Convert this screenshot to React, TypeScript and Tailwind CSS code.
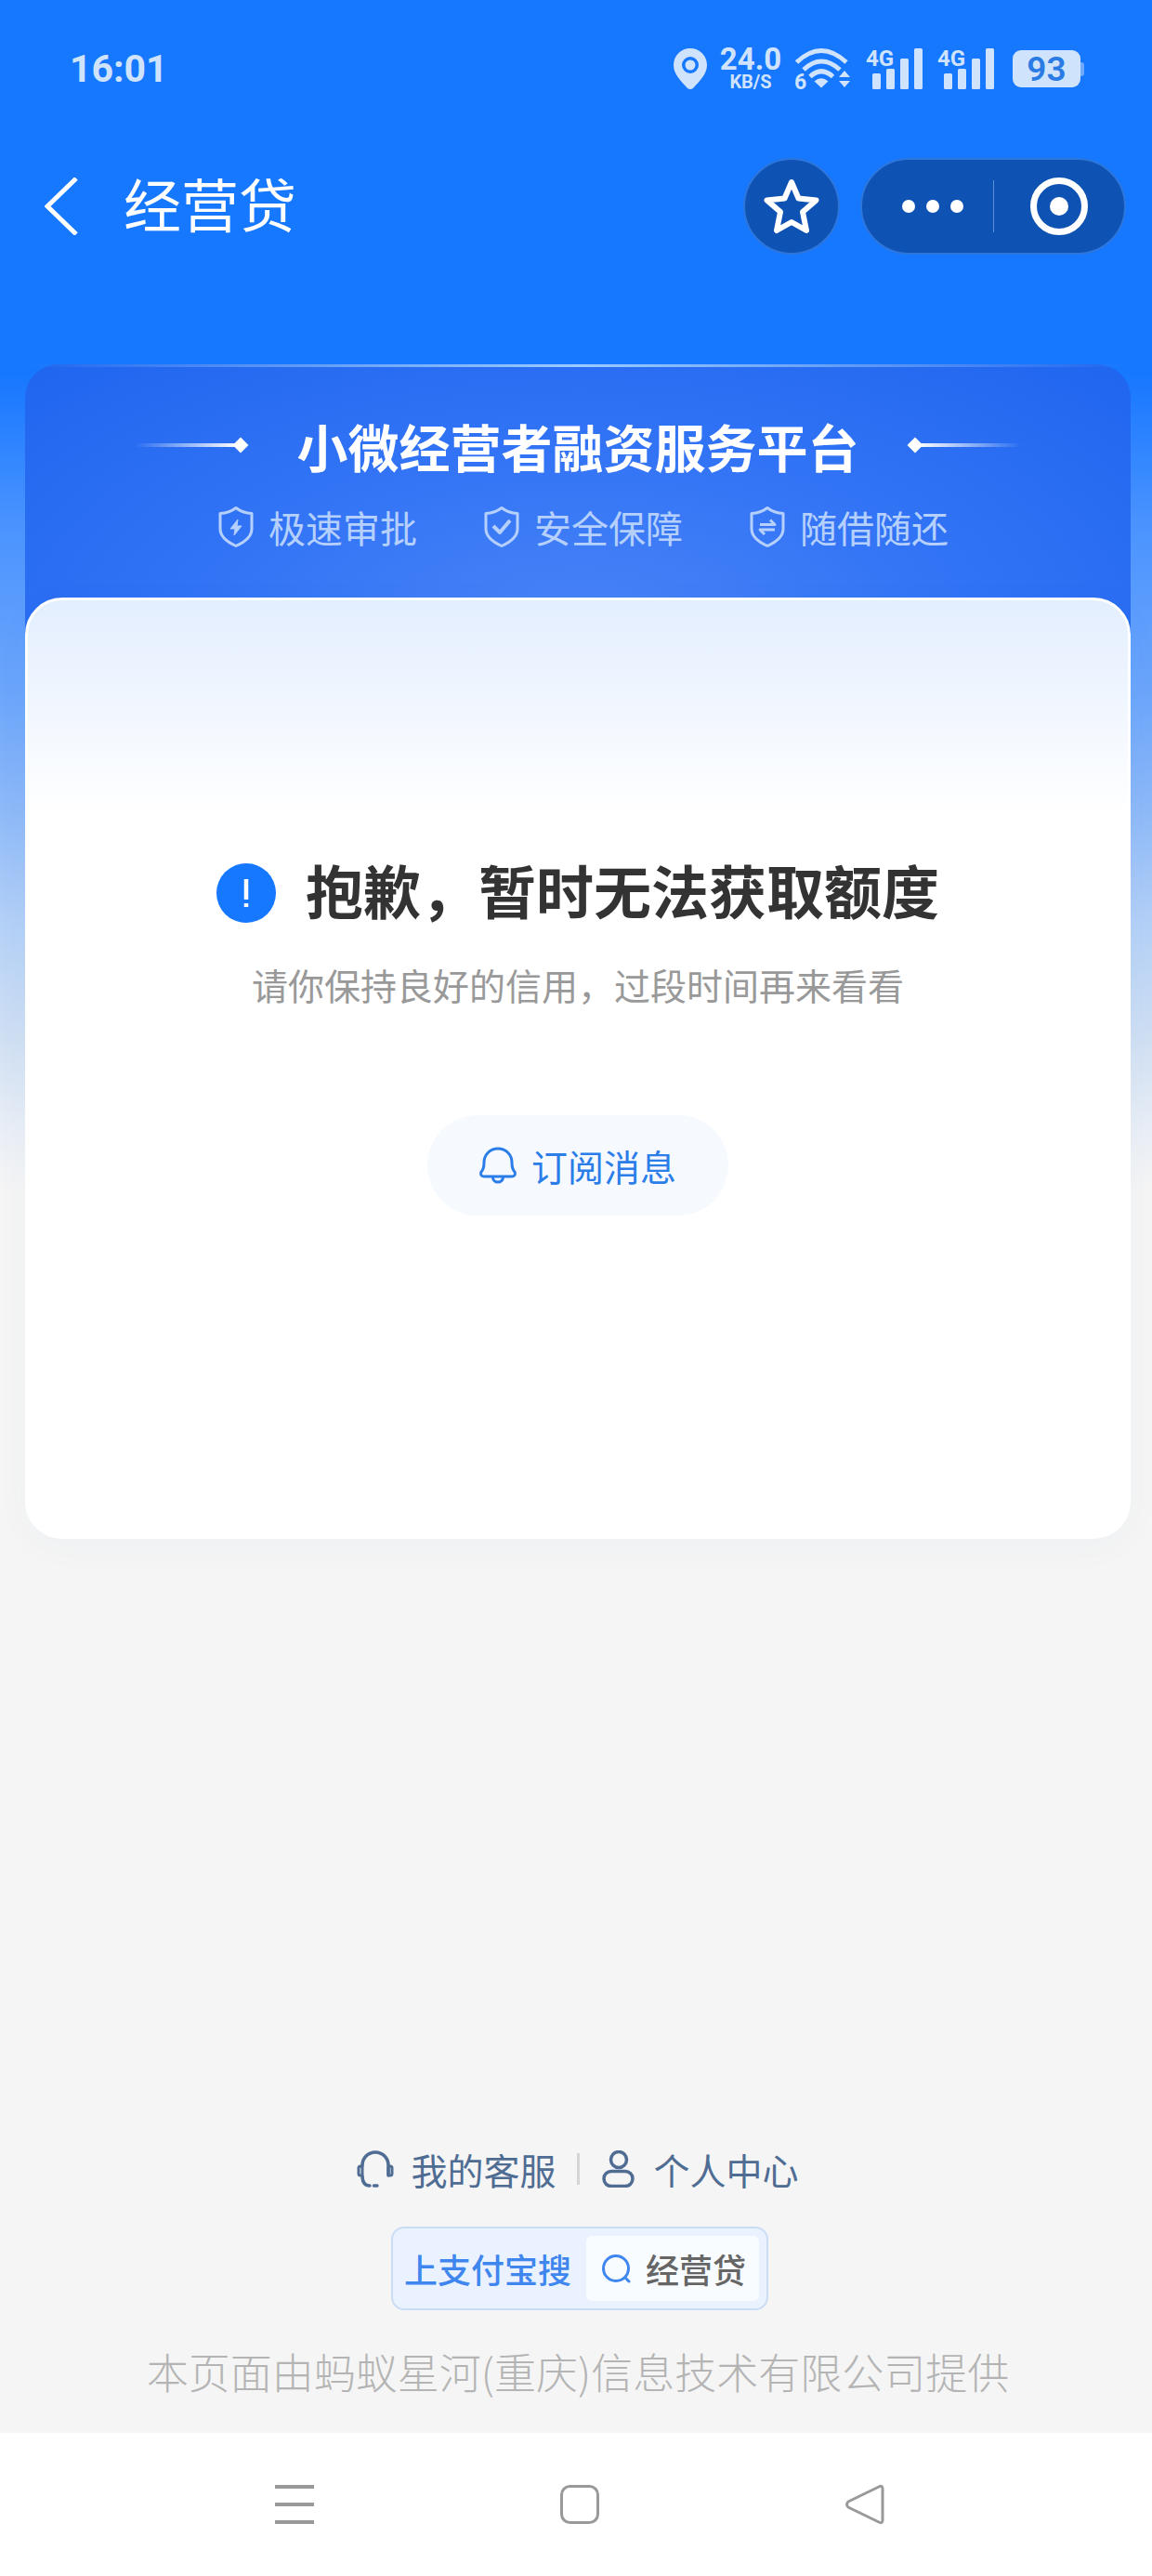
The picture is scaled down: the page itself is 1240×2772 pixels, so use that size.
import type { ReactNode } from 'react'

const StatusBar = () => {
	return (
		<div className="flex h-[148px] items-center justify-between pr-[73px] pl-[75px] font-['Roboto','Noto_Sans_CJK_SC',sans-serif] text-[#d0e3fc]">
			<time className="text-[41px] leading-none font-bold">16:01</time>
			<div className="flex items-center">
				<svg width="36" height="44" viewBox="0 0 36 44" aria-hidden="true">
					<path
						fill="currentColor"
						fillRule="evenodd"
						d="M18 0a18 18 0 0 1 18 18c0 10-8 17-15 25q-3 2-6 0C8 35 0 28 0 18A18 18 0 0 1 18 0Zm0 9a9 9 0 1 0 0 18 9 9 0 0 0 0-18Z"
					/>
					<circle cx="18" cy="18" r="5.5" fill="currentColor" />
				</svg>
				<div className="ml-3 flex w-[70px] flex-col items-center font-bold">
					<span className="text-[33px] leading-[28px]">24.0</span>
					<span className="text-[20px] leading-[20px]">KB/S</span>
				</div>
				<WifiIcon />
				<Signal />
				<Signal />
				<div className="ml-5 flex items-center">
					<div className="flex h-10 w-[73px] items-center justify-center rounded-[9px] bg-[#d0e3fc] text-[37px] leading-none font-semibold text-[#2b7be4]">
						93
					</div>
					<span className="h-[15px] w-1 rounded-r-[3px] bg-[#6fa9fb]" />
				</div>
			</div>
		</div>
	)
}

const WifiIcon = () => (
	<svg className="ml-3 overflow-visible" width="61" height="46" viewBox="0 0 61 46" aria-hidden="true">
		<g fill="none" stroke="currentColor" strokeWidth="5">
			<path d="M2.5 16Q29 -9 56 16" />
			<path d="M10 24Q29 6 49 24" />
			<path d="M17 31.500Q29 20 41.500 31.500" />
		</g>
		<path d="M29 43.500 21.500 36.500Q29 30 36.500 36.500Z" fill="currentColor" />
		<path d="m54 25 6 7H48ZM54 43l6-7H48Z" fill="currentColor" />
		<text x="0" y="45" fontSize="23" fontWeight="700" fill="currentColor">
			6
		</text>
	</svg>
)

const Signal = () => (
	<svg className="ml-4 overflow-visible" width="61" height="46" viewBox="0 0 61 46" aria-hidden="true">
		<text x="0" y="20" fontSize="24" fontWeight="700" fill="currentColor">
			4G
		</text>
		<g fill="currentColor">
			<rect x="7" y="28" width="9" height="17" rx="1.500" />
			<rect x="22" y="23" width="9" height="22" rx="1.500" />
			<rect x="37" y="12" width="9" height="33" rx="1.500" />
			<rect x="52" y="1" width="9" height="44" rx="1.500" />
		</g>
	</svg>
)

const TitleBar = () => {
	return (
		<header className="flex h-[148px] items-center pr-7 pl-12 text-white">
			<button type="button" aria-label="返回">
				<svg width="37" height="62" viewBox="0 0 37 62" fill="none" stroke="currentColor" strokeWidth="5">
					<path d="M34 1 3 31l31 30" />
				</svg>
			</button>
			<h1 className="ml-12 pb-2 text-[62px] leading-[72px]">经营贷</h1>
			<button
				type="button"
				aria-label="收藏"
				className="ml-auto flex size-[104px] items-center justify-center rounded-full border-2 border-[#2d76dc] bg-[#0e53b3]"
			>
				<svg width="60" height="62" viewBox="0 0 60 62" fill="none" stroke="currentColor" strokeWidth="6" strokeLinejoin="round">
					<path d="m30 5 7.500 17.500 19 2L42 37l4 20-16-9-16 9 4-20L3.500 24.500l19-2Z" />
				</svg>
			</button>
			<div className="ml-[22px] flex h-[104px] w-[286px] items-center rounded-full border-2 border-[#2d76dc] bg-[#0e53b3]">
				<button type="button" aria-label="更多" className="flex h-full w-1/2 items-center justify-center gap-3 pl-3">
					<span className="size-3.5 rounded-full bg-white" />
					<span className="size-3.5 rounded-full bg-white" />
					<span className="size-3.5 rounded-full bg-white" />
				</button>
				<span className="h-14 w-px bg-[#5b8fd8]" />
				<button type="button" aria-label="关闭" className="flex h-full w-1/2 items-center justify-center">
					<span className="flex size-[62px] items-center justify-center rounded-full border-[7px] border-white">
						<span className="size-5 rounded-full bg-white" />
					</span>
				</button>
			</div>
		</header>
	)
}

const Shield = ({ children }: { children: ReactNode }) => (
	<svg width="38" height="46" viewBox="0 0 38 46" fill="none" stroke="currentColor" strokeWidth="3" strokeLinejoin="round" aria-hidden="true">
		<path d="M19 2.500Q26 8 36 8.500V25Q36 36 19 43.500 2 36 2 25V8.500Q12 8 19 2.500Z" />
		{children}
	</svg>
)

const features = [
	{
		label: '极速审批',
		mark: <path d="M21 15 13 25h5l-1 7 8-10h-5Z" fill="currentColor" strokeWidth="1" />,
	},
	{
		label: '安全保障',
		mark: <path d="m10 22 7 7 11-13" strokeWidth="4" />,
	},
	{
		label: '随借随还',
		mark: <path d="M11 20.500h16l-5-5M27 26H11l5 5" />,
	},
]

const Banner = () => {
	return (
		<div className="rounded-t-[36px] bg-[radial-gradient(ellipse_at_50%_100%,#4a84f6_0%,#3475f6_45%,#1f65ee_100%)] pb-[92px]">
			<div className="h-[3px] bg-linear-to-r from-transparent via-[#9bcbff] to-transparent" />
			<div className="flex items-center justify-center gap-[54px] pt-[52px]">
				<TitleLine />
				<h2 className="text-[55px] leading-[64px] font-bold text-white">小微经营者融资服务平台</h2>
				<TitleLine flipped />
			</div>
			<ul className="mt-8 flex justify-center gap-[72px] pl-3 text-[#b5d0fd]">
				{features.map((feature) => (
					<li key={feature.label} className="flex items-center gap-4">
						<Shield>{feature.mark}</Shield>
						<span className="text-[40px] leading-[48px]">{feature.label}</span>
					</li>
				))}
			</ul>
		</div>
	)
}

const TitleLine = ({ flipped = false }: { flipped?: boolean }) => (
	<span className={flipped ? 'flex rotate-180 items-center' : 'flex items-center'}>
		<span className="h-1 w-28 bg-linear-to-r from-transparent to-white" />
		<span className="-ml-1 size-3 rotate-45 bg-white" />
	</span>
)

const ResultCard = () => {
	return (
		<section className="-mt-10 flex flex-col items-center rounded-[40px] border-3 border-white bg-white bg-linear-to-b from-[#e3eefe] to-white to-[230px] pt-[275px] pb-[345px] shadow-[0_8px_40px_rgba(40,90,160,0.03)]">
			<div className="flex items-center gap-8">
				<svg width="64" height="64" viewBox="0 0 64 64" aria-hidden="true">
					<circle cx="32" cy="32" r="32" fill="#1677ff" />
					<path d="M32 17v22M32 43v4" stroke="#fff" strokeWidth="4.500" />
				</svg>
				<h2 className="pb-2 text-[62px] leading-[72px] font-bold text-[#333]">抱歉，暂时无法获取额度</h2>
			</div>
			<p className="mt-[34px] text-[39px] leading-[48px] text-[#999]">
				请你保持良好的信用，过段时间再来看看
			</p>
			<button
				type="button"
				className="mt-[117px] flex h-[108px] items-center gap-4 rounded-full bg-[#f6f9fe] px-14 text-[39px] text-[#2b7de9]"
			>
				<svg width="40" height="40" viewBox="0 0 40 40" fill="none" stroke="currentColor" strokeWidth="3" strokeLinejoin="round" aria-hidden="true">
					<path d="M20 2C11 2 5 9 5 17c0 6-1 8-3 10-1 3 0 5 3 5h30c3 0 4-2 3-5-2-2-3-4-3-10C35 9 29 2 20 2ZM14.500 33a5.500 5 0 0 0 11 0" />
				</svg>
				订阅消息
			</button>
		</section>
	)
}

const Footer = () => {
	return (
		<footer className="mt-auto flex flex-col items-center pb-[42px] pl-1">
			<nav className="flex items-center gap-[22px] text-[39px] leading-[48px] text-[#4f6c93]">
				<a href="#service" className="flex items-center gap-[18px]">
					<svg width="40" height="40" viewBox="0 0 40 40" fill="none" stroke="currentColor" strokeWidth="3.500" strokeLinecap="round" aria-hidden="true">
						<path d="M6 17v-1a14 14 0 0 1 28 0v11M6 27q0 11 8 11M18.500 38h3.500" />
						<rect x="2" y="17" width="4" height="10" rx="2" strokeWidth="3" />
						<rect x="34" y="17" width="4" height="10" rx="2" strokeWidth="3" />
					</svg>
					我的客服
				</a>
				<span className="h-[34px] w-[3px] bg-[#d5d5d5]" />
				<a href="#profile" className="flex items-center gap-[18px]">
					<svg width="40" height="40" viewBox="0 0 40 40" fill="none" stroke="currentColor" strokeWidth="3.500" aria-hidden="true">
						<circle cx="20" cy="10" r="8.500" />
						<rect x="4" y="22.500" width="31" height="16" rx="8" />
					</svg>
					个人中心
				</a>
			</nav>
			<a
				href="#search"
				className="mt-[38px] ml-1 flex h-[90px] items-center gap-4 rounded-[14px] border-2 border-[#cbddf6] bg-[#ebf2ff] pr-2 pl-3 text-[36px] font-medium"
			>
				<span className="text-[#3f87ee]">上支付宝搜</span>
				<span className="flex h-[70px] items-center gap-4 rounded-md bg-[#f9fcff] pr-3.5 pl-4 text-[#666]">
					<svg width="32" height="32" viewBox="0 0 32 32" fill="none" stroke="#3f87ee" strokeWidth="3" strokeLinecap="round" aria-hidden="true">
						<circle cx="16" cy="16" r="13.500" />
						<path d="m26 26 4 4" />
					</svg>
					经营贷
				</span>
			</a>
			<p className="mt-[42px] text-[45px] leading-[48px] font-light text-[#b4b4b4]">
				本页面由蚂蚁星河(重庆)信息技术有限公司提供
			</p>
		</footer>
	)
}

const SystemNav = () => {
	return (
		<div className="flex h-[154px] items-center justify-around bg-white pr-39 pl-41 text-[#999]">
			<button type="button" aria-label="最近任务">
				<svg width="44" height="44" viewBox="0 0 44 44" stroke="currentColor" strokeWidth="4">
					<path d="M1 3h42M1 22h42M1 41h42" />
				</svg>
			</button>
			<button type="button" aria-label="主屏幕">
				<svg width="44" height="44" viewBox="0 0 44 44" fill="none" stroke="currentColor" strokeWidth="3">
					<rect x="2.500" y="2.500" width="39" height="39" rx="9" />
				</svg>
			</button>
			<button type="button" aria-label="返回上一级">
				<svg width="44" height="44" viewBox="0 0 44 44" fill="none" stroke="currentColor" strokeWidth="3" strokeLinejoin="round">
					<path d="M37 3q4-2 4 2v34q0 4-4 2L4 25q-3-3 0-6Z" />
				</svg>
			</button>
		</div>
	)
}

export default function App() {
	return (
		<div className="flex min-h-screen flex-col bg-[#f5f5f5] bg-[linear-gradient(180deg,#1677ff_0,#1677ff_400px,#4a93ff_564px,#6ca6fb_747px,#8db9f8_870px,#b3d0f7_992px,#cfdff3_1115px,#eaeff6_1220px,#f5f5f5_1280px)] font-['Noto_Sans_CJK_SC',sans-serif]">
			<StatusBar />
			<TitleBar />
			<main className="mt-24 flex flex-1 flex-col">
				<div className="mr-[23px] ml-[27px]">
					<Banner />
					<ResultCard />
				</div>
				<Footer />
			</main>
			<SystemNav />
		</div>
	)
}
